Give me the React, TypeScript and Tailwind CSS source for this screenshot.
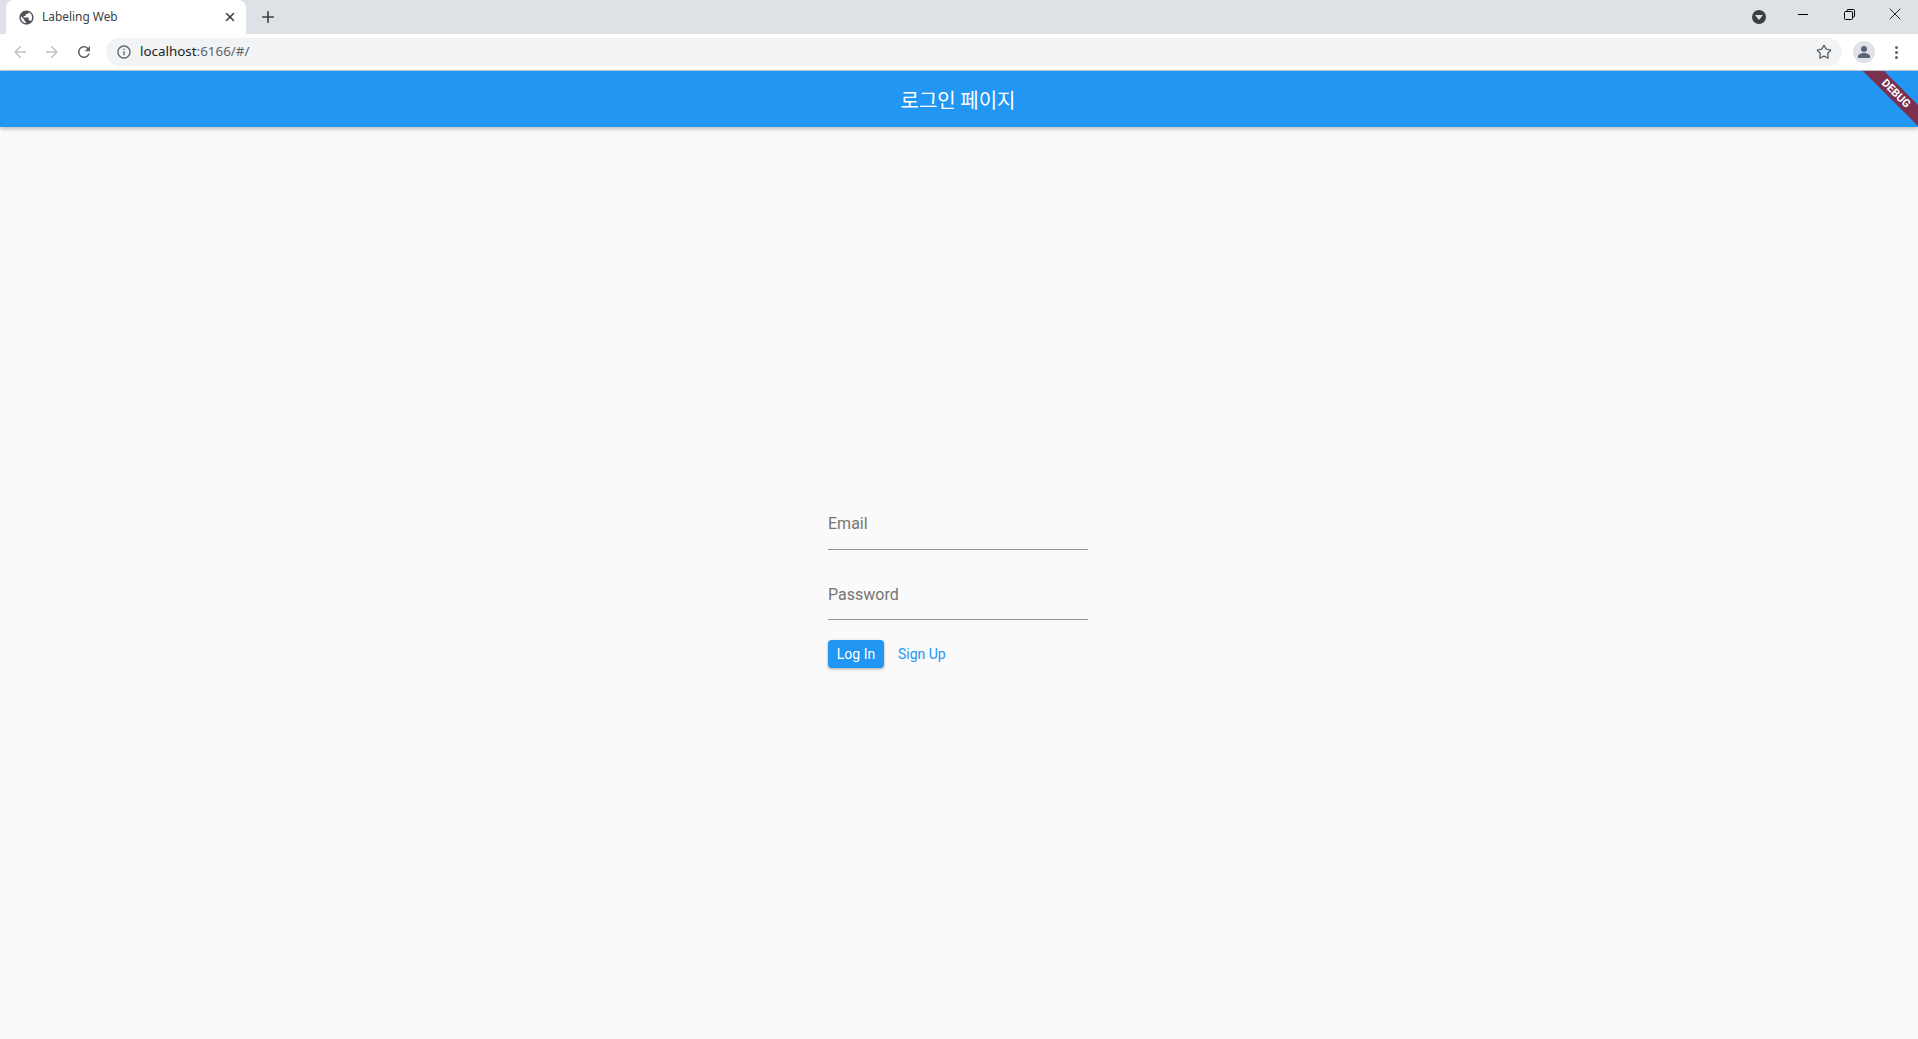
import { Star, Plus, X } from 'lucide-react';

function MaterialIcon({ d, size, className }: { d: string; size: number; className: string }) {
  return (
    <svg width={size} height={size} viewBox="0 0 24 24" fill="currentColor" className={`shrink-0 ${className}`}>
      <path d={d} />
    </svg>
  );
}

const GLOBE =
  'M12 2C6.48 2 2 6.48 2 12s4.48 10 10 10 10-4.48 10-10S17.52 2 12 2zm-1 17.93c-3.95-.49-7-3.85-7-7.93 0-.62.08-1.21.21-1.79L9 15v1c0 1.1.9 2 2 2v1.93zm6.9-2.54c-.26-.81-1-1.39-1.9-1.39h-1v-3c0-.55-.45-1-1-1H8v-2h2c.55 0 1-.45 1-1V7h2c1.1 0 2-.9 2-2v-.41c2.93 1.19 5 4.06 5 7.41 0 2.08-.8 3.97-2.1 5.39z';
const BACK = 'M20 11H7.83l5.59-5.59L12 4l-8 8 8 8 1.41-1.41L7.83 13H20v-2z';
const FORWARD = 'M4 11h12.17l-5.59-5.59L12 4l8 8-8 8-1.41-1.41L16.17 13H4v-2z';
const RELOAD =
  'M17.65 6.35A7.958 7.958 0 0 0 12 4c-4.42 0-7.99 3.58-7.99 8s3.57 8 7.99 8c3.73 0 6.84-2.55 7.73-6h-2.08A5.99 5.99 0 0 1 12 18c-3.31 0-6-2.69-6-6s2.69-6 6-6c1.66 0 3.14.69 4.22 1.78L13 11h7V4l-2.35 2.35z';
const INFO =
  'M11 7h2v2h-2zm0 4h2v6h-2zm1-9C6.48 2 2 6.48 2 12s4.48 10 10 10 10-4.48 10-10S17.52 2 12 2zm0 18c-4.41 0-8-3.59-8-8s3.59-8 8-8 8 3.59 8 8-3.59 8-8 8z';

function TabBar() {
  return (
    <div className="flex h-[34px] bg-[#dee1e6] pl-[6px]">
      <div className="flex h-[34px] w-[240px] items-center rounded-t-[8px] bg-white pl-[12px] pr-[9px]">
        <MaterialIcon d={GLOBE} size={17} className="text-[#4f5358]" />
        <span className="ml-[7px] flex-1 font-['Noto_Sans',sans-serif] text-[11.9px] leading-none text-[#3c4043]">
          Labeling Web
        </span>
        <X size={14} strokeWidth={2.6} className="text-[#3c4043]" />
      </div>
      <div className="ml-[13px] flex items-center">
        <Plus size={18} strokeWidth={2.2} className="text-[#3c4043]" />
      </div>
      <div className="ml-auto flex h-full items-start">
        <div className="mt-[10px] mr-[14px] flex h-[14px] w-[14px] items-center justify-center rounded-full bg-[#3c4043]">
          <span className="mt-[1px] h-0 w-0 border-x-[4px] border-t-[5px] border-x-transparent border-t-[#dee1e6]" />
        </div>
        <div className="mt-[14px] flex w-[46px] justify-center">
          <span className="h-px w-[10px] bg-black" />
        </div>
        <div className="mt-[9px] flex w-[46px] justify-center">
          <svg width="11" height="11" viewBox="0 0 11 11" fill="none" stroke="#000" strokeWidth="1">
            <rect x="0.5" y="2.5" width="8" height="8" rx="1" />
            <path d="M3 2.5V1.5a1 1 0 0 1 1-1h5.500a1 1 0 0 1 1 1V7a1 1 0 0 1-1 1H8.500" />
          </svg>
        </div>
        <div className="mt-[4px] flex w-[46px] justify-center">
          <X size={20} strokeWidth={1} className="text-black" />
        </div>
      </div>
    </div>
  );
}

function AddressBar() {
  return (
    <div className="flex h-[37px] items-center border-b border-[#c4c7cc] bg-white pl-[11px]">
      <MaterialIcon d={BACK} size={18} className="text-[#bdc1c6]" />
      <MaterialIcon d={FORWARD} size={18} className="ml-[14px] text-[#bdc1c6]" />
      <MaterialIcon d={RELOAD} size={18} className="ml-[14px] text-[#5f6368]" />
      <div className="ml-[13px] flex h-[28px] w-[1736px] items-center rounded-full bg-[#f1f3f4] pl-[10px] pr-[10px]">
        <MaterialIcon d={INFO} size={16} className="text-[#5f6368]" />
        <span className="ml-[8px] font-['Noto_Sans',sans-serif] text-[13.4px] leading-none text-[#202124]">
          localhost<span className="text-[#5f6368]">:6166/#/</span>
        </span>
        <Star size={16} strokeWidth={2} className="ml-auto text-[#5f6368]" />
      </div>
      <div className="ml-[11px] flex h-[22px] w-[22px] items-center justify-center rounded-full bg-[#e0e2e7]">
        <svg width="14" height="14" viewBox="0 0 14 14" fill="#5a6478">
          <circle cx="7" cy="4" r="3" />
          <path d="M1 13v-1.5C1 9.5 4 8 7 8s6 1.5 6 3.5V13z" />
        </svg>
      </div>
      <div className="ml-[20px] flex flex-col gap-[2px]">
        <span className="h-[3px] w-[3px] rounded-full bg-[#5f6368]" />
        <span className="h-[3px] w-[3px] rounded-full bg-[#5f6368]" />
        <span className="h-[3px] w-[3px] rounded-full bg-[#5f6368]" />
      </div>
    </div>
  );
}

function Field({ label, inset }: { label: string; inset: string }) {
  return (
    <div className={`flex h-[48px] w-[260px] items-center border-b border-[#949494] text-[16px] text-[#757575] ${inset}`}>
      {label}
    </div>
  );
}

export default function App() {
  return (
    <div className="flex h-[1039px] w-[1918px] flex-col overflow-hidden bg-[#fafafa] font-['Roboto','Noto_Sans_CJK_KR',sans-serif]">
      <TabBar />
      <AddressBar />
      <header className="relative flex h-[56px] items-center justify-center overflow-hidden bg-[#2196f3] pr-[2px] pt-[1px] shadow-[0_2px_4px_rgba(0,0,0,0.25)]">
        <span className="font-['Noto_Sans_CJK_KR',sans-serif] text-[20px] text-white">로그인 페이지</span>
        <div className="absolute right-[-38px] top-[15px] flex h-[15px] w-[120px] rotate-45 items-center justify-center bg-[#7b3050] text-[11px] font-bold leading-none text-white">
          DEBUG
        </div>
      </header>
      <main className="flex flex-1 flex-col items-center justify-center pt-[4px] pr-[2px]">
        <div className="flex flex-col">
          <Field label="Email" inset="pb-[3px]" />
          <div className="mt-[22px]">
            <Field label="Password" inset="pb-[1px]" />
          </div>
          <div className="mt-[20px] flex items-center">
            <button className="flex h-[28px] w-[56px] items-center justify-center rounded-[4px] bg-[#2196f3] text-[14px] text-white shadow-[0_1px_3px_rgba(0,0,0,0.35)]">
              Log In
            </button>
            <span className="ml-[14px] text-[14px] text-[#2196f3]">Sign Up</span>
          </div>
        </div>
      </main>
    </div>
  );
}
